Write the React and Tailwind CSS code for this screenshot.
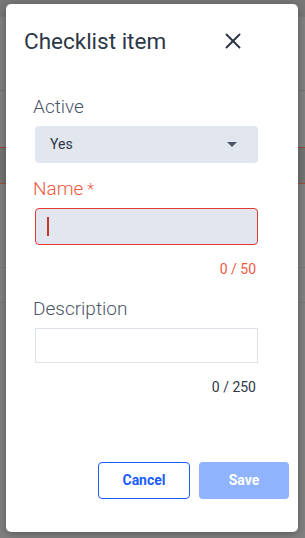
import { X } from 'lucide-react';

function Backdrop() {
  // page behind the dim overlay
  return (
    <div className="h-[538px] w-[305px] bg-[#808080] flex flex-col">
      <div className="h-[17px] bg-[#777777]" />
      <div className="h-[74px] border-b border-[#727272]" />
      <div className="h-[56px]" />
      <div className="h-[37px] bg-[#737373] border-y border-[#9b4a3a]" />
      <div className="h-[84px] border-b border-[#767676]" />
      <div className="h-[35px] border-b border-[#767676]" />
    </div>
  );
}

export default function App() {
  return (
    <div className="relative h-[538px] w-[305px] overflow-hidden font-['Roboto',sans-serif]">
      <Backdrop />

      {/* Dialog */}
      <div className="absolute left-[6px] top-[4px] w-[292px] h-[528px] bg-white rounded-[5px] shadow-[0_2px_8px_rgba(0,0,0,0.3)] flex flex-col">
        <div className="flex items-center justify-between pl-[18px] pr-[52px] pt-[23px]">
          <h2 className="text-[22.5px] leading-[28px] text-[#2d3748]">Checklist item</h2>
          <X size={26} strokeWidth={1.8} className="text-[#2d3748]" />
        </div>

        <div className="px-[29px] pt-[40px] flex flex-col">
          <label className="-ml-[2px] text-[19px] leading-[24px] font-light text-[#4a5568]">Active</label>
          <div className="mt-[7px] h-[37px] w-[223px] bg-[#e2e6ee] rounded-[4px] flex items-center justify-between pl-[15px] pr-[21px]">
            <span className="text-[14px] text-[#2d3748]">Yes</span>
            <svg width="10" height="5" viewBox="0 0 10 5">
              <path d="M0 0h10L5 5z" fill="#4a5568" />
            </svg>
          </div>

          <label className="-ml-[2px] mt-[14px] h-[24px] text-[19px] leading-[24px] font-light text-[#ef5a3f]">
            Name<span className="ml-[4px] text-[16px] leading-none">*</span>
          </label>
          <div className="mt-[7px] h-[37px] w-[223px] bg-[#e2e6ee] rounded-[4px] border border-[#e53935] flex items-center pl-[11px]">
            <span className="w-[2px] h-[19px] bg-[#c0392b]" />
          </div>
          <div className="mt-[16px] w-[223px] text-right pr-[2px] text-[14px] leading-[16px] text-[#ef5a3f]">0 / 50</div>

          <label className="-ml-[2px] mt-[20px] text-[19px] leading-[24px] font-light text-[#4a5568]">Description</label>
          <div className="mt-[7px] h-[35px] w-[223px] bg-white border border-[#dde1e9]" />
          <div className="mt-[16px] w-[223px] text-right pr-[2px] text-[14px] leading-[16px] text-[#2d3748]">0 / 250</div>
        </div>

        <div className="mt-auto flex justify-end gap-[9px] pr-[9px] pb-[33px]">
          <button className="w-[92px] h-[37px] rounded-[4px] border border-[#1a5cff] text-[14px] font-bold text-[#1a5cff] bg-white">
            Cancel
          </button>
          <button className="w-[90px] h-[37px] rounded-[4px] bg-[#8fb3fd] text-[14px] font-bold text-white">
            Save
          </button>
        </div>
      </div>
    </div>
  );
}
